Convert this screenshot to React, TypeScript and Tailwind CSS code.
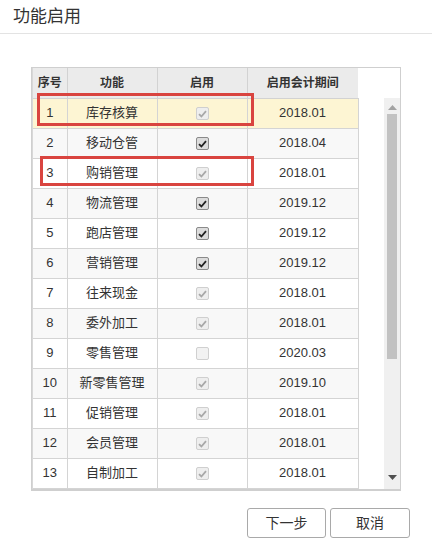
import React from "react"

type Row = {
  no: number | null
  name: string
  state: "on" | "locked" | "off" | "none"
  period: string
}

const rows: Row[] = [
  { no: 1, name: "库存核算", state: "locked", period: "2018.01" },
  { no: 2, name: "移动仓管", state: "on", period: "2018.04" },
  { no: 3, name: "购销管理", state: "locked", period: "2018.01" },
  { no: 4, name: "物流管理", state: "on", period: "2019.12" },
  { no: 5, name: "跑店管理", state: "on", period: "2019.12" },
  { no: 6, name: "营销管理", state: "on", period: "2019.12" },
  { no: 7, name: "往来现金", state: "locked", period: "2018.01" },
  { no: 8, name: "委外加工", state: "locked", period: "2018.01" },
  { no: 9, name: "零售管理", state: "off", period: "2020.03" },
  { no: 10, name: "新零售管理", state: "locked", period: "2019.10" },
  { no: 11, name: "促销管理", state: "locked", period: "2018.01" },
  { no: 12, name: "会员管理", state: "locked", period: "2018.01" },
  { no: 13, name: "自制加工", state: "locked", period: "2018.01" },
  // 下一行只露出上边线
  { no: null, name: "", state: "none", period: "" },
]

const font = { fontFamily: '"Liberation Sans", "Noto Sans CJK SC", sans-serif' }

function Check({ state }: { state: Row["state"] }) {
  if (state === "none") return null
  if (state === "off") {
    return <span className="inline-block w-[13px] h-[13px] rounded-[2px] border border-[#d0d0d0] bg-[#f2f2f2] align-middle" />
  }
  const on = state === "on"
  return (
    <span
      className={`inline-flex items-center justify-center w-[13px] h-[13px] rounded-[2px] border align-middle ${
        on ? "border-[#8a8a8a] bg-[#dcdcdc]" : "border-[#cfcfcf] bg-[#eeeeee]"
      }`}
    >
      <svg width="9" height="8" viewBox="0 0 9 8">
        <path
          d="M1 4.2 L3.4 6.5 L8 1.2"
          fill="none"
          stroke={on ? "#222" : "#a8a8a8"}
          strokeWidth="1.8"
        />
      </svg>
    </span>
  )
}

export default function App() {
  return (
    <div className="w-[432px] h-[539px] bg-white text-[#333] overflow-hidden" style={font}>
      {/* 标题 */}
      <div className="h-[34px] border-b border-[#e3e3e3] pl-[13px] flex items-center">
        <span className="text-[17px] text-[#333]">功能启用</span>
      </div>

      {/* 表格 */}
      <div className="relative ml-[31px] mt-[33px] w-[370px] h-[424px] border border-[#cfcfcf] border-b-2 flex overflow-hidden">
        <div className="w-[352px] border-l border-[#d8d8d8] overflow-hidden">
          <table className="border-collapse text-[13px] table-fixed w-[325px]">
            <colgroup>
              <col className="w-[34px]" />
              <col className="w-[90px]" />
              <col className="w-[90px]" />
              <col className="w-[111px]" />
            </colgroup>
            <thead>
              <tr className="h-[30px] bg-[#ebebeb] text-[12px] font-bold">
                <th className="border-r border-b border-[#d2d2d2] font-bold">序号</th>
                <th className="border-r border-b border-[#d2d2d2] font-bold">功能</th>
                <th className="border-r border-b border-[#d2d2d2] font-bold">启用</th>
                <th className="border-b border-[#d2d2d2] font-bold">启用会计期间</th>
              </tr>
            </thead>
            <tbody>
              {rows.map((r, i) => (
                <tr
                  key={i}
                  className={`h-[30px] ${i === 0 ? "bg-[#fdf5d3]" : i % 2 === 1 ? "bg-[#f8f8f8]" : "bg-white"}`}
                >
                  <td className="border-r border-b border-[#d4d4d4] text-center">{r.no}</td>
                  <td className="border-r border-b border-[#d4d4d4] text-center">{r.name}</td>
                  <td className="border-r border-b border-[#d4d4d4] text-center">
                    <Check state={r.state} />
                  </td>
                  <td className="border-b border-r border-[#d4d4d4] text-center">{r.period}</td>
                </tr>
              ))}
            </tbody>
          </table>
        </div>

        {/* 滚动条 */}
        <div className="w-[16px] flex flex-col">
          <div className="h-[30px] bg-white" />
          <div className="flex-1 bg-[#f0f0f0] flex flex-col items-center">
            <svg width="9" height="5" viewBox="0 0 9 5" className="mt-[7px]">
              <path d="M0 5 L4.5 0 L9 5 Z" fill="#a3a3a3" />
            </svg>
            <div className="mt-[4px] w-[10px] h-[245px] bg-[#c2c2c2]" />
            <div className="flex-1" />
            <svg width="9" height="5" viewBox="0 0 9 5" className="mb-[9px]">
              <path d="M0 0 L9 0 L4.5 5 Z" fill="#505050" />
            </svg>
          </div>
        </div>

        {/* 标记框 */}
        <div className="absolute left-[5px] top-[25px] w-[217px] h-[33px] border-[3px] border-[#d9443f]" />
        <div className="absolute left-[8px] top-[88px] w-[214px] h-[30px] border-[3px] border-[#d9443f]" />
      </div>

      {/* 按钮 */}
      <div className="mt-[17px] pl-[247px] flex gap-[4px]">
        <button className="w-[79px] h-[30px] rounded-[3px] border border-[#a9a9a9] bg-white text-[14px] text-[#333]">
          下一步
        </button>
        <button className="w-[80px] h-[30px] rounded-[3px] border border-[#a9a9a9] bg-white text-[14px] text-[#333]">
          取消
        </button>
      </div>
    </div>
  )
}
